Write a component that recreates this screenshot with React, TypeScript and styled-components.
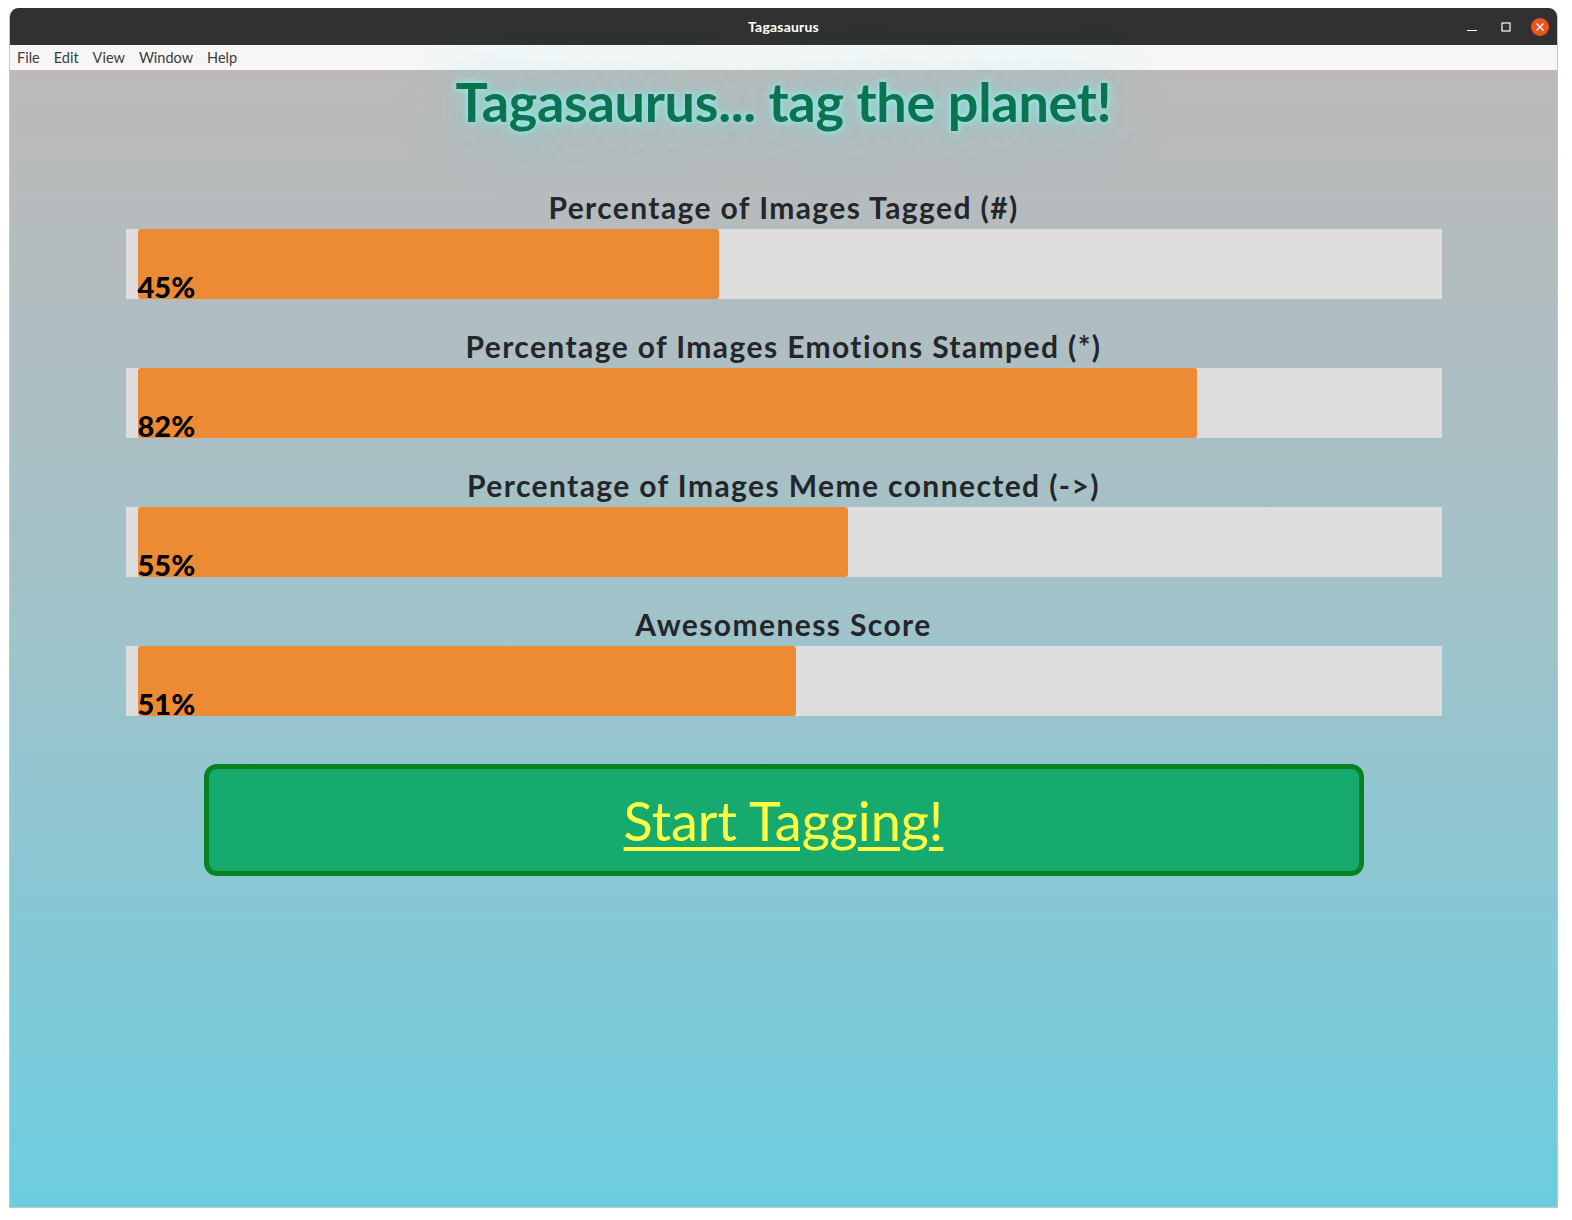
import React from "react";
import styled, { createGlobalStyle } from "styled-components";

const GlobalStyle = createGlobalStyle`
  html, body {
    margin: 0;
    padding: 0;
    background: #ffffff;
    overflow: hidden;
  }
  * {
    box-sizing: border-box;
  }
`;

const Screen = styled.div`
  padding: 8px 0 0 9px;
`;

const Window = styled.div`
  width: 1549px;
  height: 1200px;
  display: flex;
  flex-direction: column;
  border: 1px solid #c4c4c4;
  border-top: none;
  border-radius: 9px 9px 0 0;
  overflow: hidden;
`;

const TitleBar = styled.div`
  height: 37px;
  flex-shrink: 0;
  background: #313131;
  display: grid;
  grid-template-columns: 1fr auto 1fr;
  align-items: center;
  color: #ffffff;
  font-family: "Lato", "Noto Sans", sans-serif;
  font-weight: 700;
  font-size: 14px;
`;

const WindowTitle = styled.div`
  grid-column: 2;
  letter-spacing: 0.2px;
`;

const Controls = styled.div`
  grid-column: 3;
  justify-self: end;
  display: flex;
  align-items: center;
  gap: 16px;
  padding-right: 8px;
`;

const ControlButton = styled.div<{ $close?: boolean }>`
  width: 18px;
  height: 18px;
  border-radius: 50%;
  display: flex;
  align-items: center;
  justify-content: center;
  background: ${(p) => (p.$close ? "#e95420" : "transparent")};
`;

const MenuBar = styled.div`
  height: 25px;
  flex-shrink: 0;
  background: #f6f6f6;
  display: flex;
  align-items: center;
  gap: 12px;
  padding-left: 6px;
  font-family: "Lato", "Noto Sans", sans-serif;
  font-size: 14.5px;
  color: #3c3c3c;
`;

const MenuItem = styled.span`
  padding: 0 1px;
`;

const Content = styled.main`
  flex: 1;
  display: flex;
  flex-direction: column;
  align-items: center;
  background: linear-gradient(180deg, #bdb9b9 0%, #9fc3ca 50%, #6ccde0 100%);
  font-family: "Lato", "Noto Sans", sans-serif;
`;

const Title = styled.h1`
  margin: 0;
  padding: 0 60px 56px;
  font-size: 54px;
  font-weight: 700;
  line-height: 64px;
  color: #0b7350;
  letter-spacing: -0.3px;
  text-shadow: 0 0 6px #9ff0ee, 0 0 14px #7fdcd8, 0 0 60px #7ad6d6;
`;

const StatList = styled.section`
  width: 1316px;
  display: flex;
  flex-direction: column;
  gap: 30px;
`;

const Stat = styled.div`
  display: flex;
  flex-direction: column;
  gap: 5px;
`;

const StatLabel = styled.h2`
  margin: 0;
  text-align: center;
  font-size: 30px;
  line-height: 34px;
  font-weight: 700;
  letter-spacing: 1.4px;
  color: #23262b;
`;

const Track = styled.div`
  height: 70px;
  padding: 0 12px;
  background: #dddddd;
`;

const Fill = styled.div`
  height: 100%;
  display: flex;
  align-items: flex-end;
  background: #ed8b34;
  border-radius: 3px;
`;

const Percent = styled.span`
  font-size: 29px;
  line-height: 24px;
  font-weight: 900;
  color: #000000;
  white-space: nowrap;
`;

const StartButton = styled.button`
  margin-top: 48px;
  width: 1160px;
  height: 112px;
  border: 5px solid #0a8120;
  border-radius: 13px;
  background: #16aa6e;
  display: flex;
  align-items: center;
  justify-content: center;
  cursor: pointer;
`;

const StartLink = styled.a`
  font-family: "Lato", "Noto Sans", sans-serif;
  font-size: 54px;
  font-weight: 400;
  color: #ffff44;
  text-decoration: underline;
  text-decoration-thickness: 4px;
  text-underline-offset: 6px;
`;

const stats = [
  { label: "Percentage of Images Tagged (#)", value: 45 },
  { label: "Percentage of Images Emotions Stamped (*)", value: 82 },
  { label: "Percentage of Images Meme connected (->)", value: 55 },
  { label: "Awesomeness Score", value: 51 },
];

export default function App() {
  return (
    <>
      <GlobalStyle />
      <Screen>
        <Window>
          <TitleBar>
            <WindowTitle>Tagasaurus</WindowTitle>
            <Controls>
              <ControlButton>
                <svg width="10" height="10" viewBox="0 0 10 10">
                  <path d="M0 8.5 H10" stroke="#fff" strokeWidth="1.2" />
                </svg>
              </ControlButton>
              <ControlButton>
                <svg width="10" height="10" viewBox="0 0 10 10">
                  <rect x="1" y="1" width="8" height="8" fill="none" stroke="#fff" strokeWidth="1.2" />
                </svg>
              </ControlButton>
              <ControlButton $close>
                <svg width="10" height="10" viewBox="0 0 10 10">
                  <path d="M1.5 1.5 L8.5 8.5 M8.5 1.5 L1.5 8.5" stroke="#fff" strokeWidth="1.4" />
                </svg>
              </ControlButton>
            </Controls>
          </TitleBar>
          <MenuBar>
            {["File", "Edit", "View", "Window", "Help"].map((m) => (
              <MenuItem key={m}>{m}</MenuItem>
            ))}
          </MenuBar>
          <Content>
            <Title>Tagasaurus... tag the planet!</Title>
            <StatList>
              {stats.map((s) => (
                <Stat key={s.label}>
                  <StatLabel>{s.label}</StatLabel>
                  <Track>
                    <Fill style={{ width: `${s.value}%` }}>
                      <Percent>{s.value}%</Percent>
                    </Fill>
                  </Track>
                </Stat>
              ))}
            </StatList>
            <StartButton>
              <StartLink href="#">Start Tagging!</StartLink>
            </StartButton>
          </Content>
        </Window>
      </Screen>
    </>
  );
}
